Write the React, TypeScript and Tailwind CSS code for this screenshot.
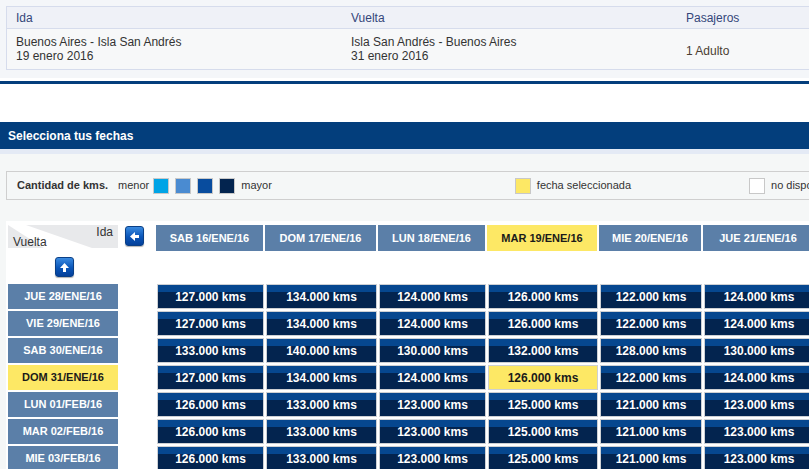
import React from 'react';

const cols = [
  { label: 'SAB 16/ENE/16', w: 'w-[107px]' },
  { label: 'DOM 17/ENE/16', w: 'w-[111px]' },
  { label: 'LUN 18/ENE/16', w: 'w-[107px]' },
  { label: 'MAR 19/ENE/16', w: 'w-[110px]', selected: true },
  { label: 'MIE 20/ENE/16', w: 'w-[102px]' },
  { label: 'JUE 21/ENE/16', w: 'w-[110px]' },
];

const rows = [
  { label: 'JUE 28/ENE/16', kms: [127, 134, 124, 126, 122, 124] },
  { label: 'VIE 29/ENE/16', kms: [127, 134, 124, 126, 122, 124] },
  { label: 'SAB 30/ENE/16', kms: [133, 140, 130, 132, 128, 130] },
  { label: 'DOM 31/ENE/16', kms: [127, 134, 124, 126, 122, 124], selected: true },
  { label: 'LUN 01/FEB/16', kms: [126, 133, 123, 125, 121, 123] },
  { label: 'MAR 02/FEB/16', kms: [126, 133, 123, 125, 121, 123] },
  { label: 'MIE 03/FEB/16', kms: [126, 133, 123, 125, 121, 123] },
];

function ArrowButton({ dir }: { dir: 'left' | 'up' }) {
  return (
    <div className="w-[19px] h-[20px] rounded-[3px] border border-[#0a3f86] bg-[linear-gradient(to_bottom,#3a8ae0,#0a55b8_55%,#04409a)] flex items-center justify-center shadow-[0_1px_1px_rgba(0,0,0,0.3)]">
      <svg width="11" height="11" viewBox="0 0 11 11" className={dir === 'up' ? 'rotate-90' : ''}>
        <polygon points="1,5.5 6,1 6,4 10,4 10,7 6,7 6,10" fill="#fff" />
      </svg>
    </div>
  );
}

export default function App() {
  return (
    <div className="w-[809px] h-[469px] overflow-hidden bg-white font-['Liberation_Sans',Arial,sans-serif]">
      {/* resumen del viaje */}
      <div className="w-[830px] bg-[#f4f6f9] pt-[6px] pl-[6px] h-[78px]">
        <div className="border border-[#d6dcec] bg-[#f7f8f9]">
          <div className="grid grid-cols-[335px_335px_1fr] h-[22px] items-center bg-[#eff1f7] border-b border-[#d6dcec] text-[12px] text-[#34467a]">
            <div className="px-[9px] pt-[1px]">Ida</div>
            <div className="px-[9px] pt-[1px]">Vuelta</div>
            <div className="px-[9px] pt-[1px]">Pasajeros</div>
          </div>
          <div className="grid grid-cols-[335px_335px_1fr] h-[40px] items-center text-[12px] leading-[14px] text-[#333]">
            <div className="px-[9px]">
              <div>Buenos Aires - Isla San Andrés</div>
              <div>19 enero 2016</div>
            </div>
            <div className="px-[9px]">
              <div>Isla San Andrés - Buenos Aires</div>
              <div>31 enero 2016</div>
            </div>
            <div className="px-[9px] pt-[4px] text-[#4a3d33]">1 Adulto</div>
          </div>
        </div>
      </div>
      <div className="h-[3px] bg-white" />
      <div className="h-[3px] bg-[#033e7c]" />
      <div className="h-[38px]" />

      {/* selector de fechas */}
      <div className="h-[27px] bg-[#033e7c] flex items-center px-[8px] text-[12px] font-bold text-white">
        Selecciona tus fechas
      </div>
      <div className="h-[5px] bg-[#e4eaf5]" />
      <div className="bg-[#f5f7f7] pt-[17px] pl-[6px] h-[400px]">
        <div className="w-[830px] h-[29px] border border-[#cfcfcf] flex items-center text-[11px] text-[#333] whitespace-nowrap">
          <span className="ml-[10px] shrink-0 font-bold">Cantidad de kms.</span>
          <span className="ml-[10px] shrink-0">menor</span>
          <span className="ml-[4px] shrink-0 w-[16px] h-[16px] border border-[#c8c8c8] bg-[#00a4e6]" />
          <span className="ml-[6px] shrink-0 w-[16px] h-[16px] border border-[#c8c8c8] bg-[#4a8bd1]" />
          <span className="ml-[6px] shrink-0 w-[16px] h-[16px] border border-[#c8c8c8] bg-[#084c9e]" />
          <span className="ml-[6px] shrink-0 w-[16px] h-[16px] border border-[#c8c8c8] bg-[#03244f]" />
          <span className="ml-[6px] shrink-0">mayor</span>
          <span className="ml-[243px] shrink-0 w-[16px] h-[16px] border border-[#c8c8c8] bg-[#fde865]" />
          <span className="ml-[6px] shrink-0">fecha seleccionada</span>
          <span className="ml-[118px] shrink-0 w-[16px] h-[16px] border border-[#c8c8c8] bg-white" />
          <span className="ml-[6px] shrink-0">no disponible</span>
        </div>

        <div className="mt-[21px] w-[830px] bg-white pl-[2px] pt-[4px] pb-[10px]">
          {/* cabecera de columnas */}
          <div className="flex items-start h-[26px]">
            <div className="relative w-[110px] h-[23px] bg-[#e8e9eb] text-[12px] text-[#333]">
              <svg className="absolute inset-0" width="110" height="23" viewBox="0 0 110 23">
                <polygon points="0,0 18,0 84,23 36,23" fill="#fff" />
              </svg>
              <span className="absolute right-[5px] top-[1px] leading-[13px]">Ida</span>
              <span className="absolute left-[5px] bottom-[-1px] leading-[13px]">Vuelta</span>
            </div>
            <div className="ml-[7px] mt-[1px]">
              <ArrowButton dir="left" />
            </div>
            <div className="ml-[12px] flex gap-[2px]">
              {cols.map((c) => (
                <div
                  key={c.label}
                  className={`${c.w} h-[26px] flex items-center justify-center text-[11px] font-bold ${
                    c.selected ? 'bg-[#fde865] text-[#1a1a1a]' : 'bg-[#5b7fa8] text-white'
                  }`}
                >
                  {c.label}
                </div>
              ))}
            </div>
          </div>

          {/* flecha vuelta */}
          <div className="w-[110px] h-[33px] flex justify-center pt-[6px]">
            <div className="ml-[3px]">
              <ArrowButton dir="up" />
            </div>
          </div>

          {/* filas */}
          <div className="flex flex-col gap-[2px]">
            {rows.map((r) => (
              <div key={r.label} className="flex h-[25px]">
                <div
                  className={`w-[110px] h-[25px] flex items-center justify-center text-[11px] font-bold ${
                    r.selected ? 'bg-[#fde865] text-[#1a1a1a]' : 'bg-[#5b7fa8] text-white'
                  }`}
                >
                  {r.label}
                </div>
                <div className="ml-[39px] flex gap-[2px]">
                  {r.kms.map((k, i) => {
                    const sel = r.selected && cols[i].selected;
                    return (
                      <div
                        key={i}
                        className={`${cols[i].w} h-[25px] border border-[#cdd0d4] flex items-center justify-center text-[12px] font-bold ${
                          sel
                            ? 'bg-[#fde865] text-[#1a1a1a]'
                            : 'bg-[linear-gradient(to_bottom,#06478f_0,#06478f_7px,#03244f_7px)] text-white'
                        }`}
                      >
                        {k}.000 kms
                      </div>
                    );
                  })}
                </div>
              </div>
            ))}
          </div>
        </div>
      </div>
    </div>
  );
}
